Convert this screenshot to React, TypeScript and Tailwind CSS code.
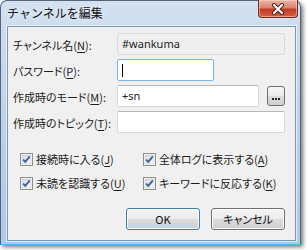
import React from 'react';

const font = "font-['Noto_Sans_CJK_JP','Noto_Sans',sans-serif] [font-feature-settings:'palt']";

const Key = ({ k }: { k: string }) => (
  <>
    (<span className="underline underline-offset-2">{k}</span>)
  </>
);

const Label = ({ text, k }: { text: string; k: string }) => (
  <div className="w-[104px] shrink-0 pt-[2px] text-[11px] text-[#1b1b1b]">
    {text}
    <Key k={k} />:
  </div>
);

const Check = () => (
  <svg width="13" height="13" viewBox="0 0 13 13" className="shrink-0">
    <defs>
      <linearGradient id="cb" x1="0" y1="0" x2="1" y2="1">
        <stop offset="0" stopColor="#d6d6d6" />
        <stop offset="1" stopColor="#fbfbfb" />
      </linearGradient>
    </defs>
    <rect x="0.5" y="0.5" width="12" height="12" fill="#fff" stroke="#8e8f8f" />
    <rect x="2" y="2" width="9" height="9" fill="url(#cb)" stroke="#c4c4c4" strokeWidth="0.6" />
    <path d="M3.2 6.6 L5.3 8.9 L9.8 3.4" fill="none" stroke="#3b58a3" strokeWidth="1.7" />
  </svg>
);

const CheckItem = ({ text, k }: { text: string; k: string }) => (
  <div className="flex items-center gap-[3px] h-[16px] text-[11px] text-[#1b1b1b]">
    <Check />
    <span>
      {text}
      <Key k={k} />
    </span>
  </div>
);

const Btn = ({ label, def }: { label: string; def?: boolean }) => (
  <div
    className={`w-[74px] h-[22px] rounded-[3px] border flex items-center justify-center text-[11px] text-[#111] bg-[linear-gradient(to_bottom,#f4f4f4_0%,#ebebeb_50%,#dcdcdc_51%,#cfcfcf_100%)] shadow-[inset_0_0_0_1px_rgba(255,255,255,0.8)] ${
      def ? 'border-[#3c7fb1]' : 'border-[#707070]'
    }`}
  >
    {label}
  </div>
);

export default function App() {
  return (
    <div className={`w-[308px] h-[250px] bg-white overflow-hidden ${font}`}>
      <div className="w-[301px] h-[245px] flex flex-col rounded-t-[7px] border border-[#53647b] border-b-[#4fb8e6] bg-[linear-gradient(to_bottom,#d3e1f0_0%,#c3d6ec_30%,#b7cde8_70%,#b0c8e6_100%)] shadow-[2px_2px_4px_rgba(0,0,0,0.55)]">
        <div className="h-[25px] flex items-start justify-between">
          <div className="pl-[6px] pt-[5px] text-[12px] leading-[14px] text-[#111] [font-feature-settings:normal] [text-shadow:0_0_6px_#fff]">
            チャンネルを編集
          </div>
          <div className="-mt-px mr-[2px] w-[40px] h-[18px] rounded-b-[4px] border border-[#7a2b1e] border-t-0 bg-[linear-gradient(to_bottom,#eab3a6_0%,#db8572_45%,#c23a22_55%,#cf6248_100%)] flex items-center justify-center shadow-[inset_0_0_0_1px_rgba(255,220,210,0.5)]">
            <svg width="14" height="12" viewBox="0 0 14 12">
              <path d="M3 2 L11 10 M11 2 L3 10" stroke="#4a1c14" strokeWidth="4" strokeLinecap="round" />
              <path d="M3 2 L11 10 M11 2 L3 10" stroke="#fff" strokeWidth="2.2" strokeLinecap="round" />
            </svg>
          </div>
        </div>
        <div className="flex-1 ml-[6px] mr-[4px] mb-[3px] border border-[#8193ad] bg-[#f0f0f0] shadow-[0_0_0_1px_rgba(255,255,255,0.6)] flex flex-col pl-[5px] pt-[6px]">
          <div className="flex flex-col gap-[4px]">
            <div className="flex h-[22px] items-center">
              <Label text="チャンネル名" k="N" />
              <div className="w-[168px] h-[22px] rounded-[2px] border border-[#dadada] bg-[#efefef] pl-[4px] flex items-center text-[11px] text-[#222] font-['Noto_Sans',sans-serif]">
                #wankuma
              </div>
            </div>
            <div className="flex h-[22px] items-center">
              <Label text="パスワード" k="P" />
              <div className="w-[97px] h-[22px] rounded-[2px] border border-[#7fb4e6] bg-white pl-[4px] flex items-center">
                <div className="w-px h-[13px] bg-black" />
              </div>
            </div>
            <div className="flex h-[22px] items-center">
              <Label text="作成時のモード" k="M" />
              <div className="w-[142px] h-[22px] rounded-[2px] border border-[#d5d9df] border-t-[#b5b8bd] bg-white pl-[4px] flex items-center text-[11px] text-[#222] font-['Noto_Sans',sans-serif]">
                +sn
              </div>
              <div className="ml-[8px] w-[18px] h-[20px] rounded-[3px] border border-[#707070] bg-[linear-gradient(to_bottom,#f4f4f4_0%,#ebebeb_50%,#dcdcdc_51%,#cfcfcf_100%)] flex items-end justify-center pb-[5px] gap-[1px]">
                <div className="w-[2px] h-[2px] bg-[#222]" />
                <div className="w-[2px] h-[2px] bg-[#222]" />
                <div className="w-[2px] h-[2px] bg-[#222]" />
              </div>
            </div>
            <div className="flex h-[22px] items-center">
              <Label text="作成時のトピック" k="T" />
              <div className="w-[168px] h-[22px] rounded-[2px] border border-[#d5d9df] border-t-[#b5b8bd] bg-white" />
            </div>
          </div>
          <div className="mt-[18px] pl-[7px] grid grid-cols-[123px_auto] gap-y-[8px]">
            <CheckItem text="接続時に入る" k="J" />
            <CheckItem text="全体ログに表示する" k="A" />
            <CheckItem text="未読を認識する" k="U" />
            <CheckItem text="キーワードに反応する" k="K" />
          </div>
          <div className="mt-[17px] flex justify-end gap-[11px] pr-[10px]">
            <Btn label="OK" def />
            <Btn label="キャンセル" />
          </div>
        </div>
      </div>
    </div>
  );
}
